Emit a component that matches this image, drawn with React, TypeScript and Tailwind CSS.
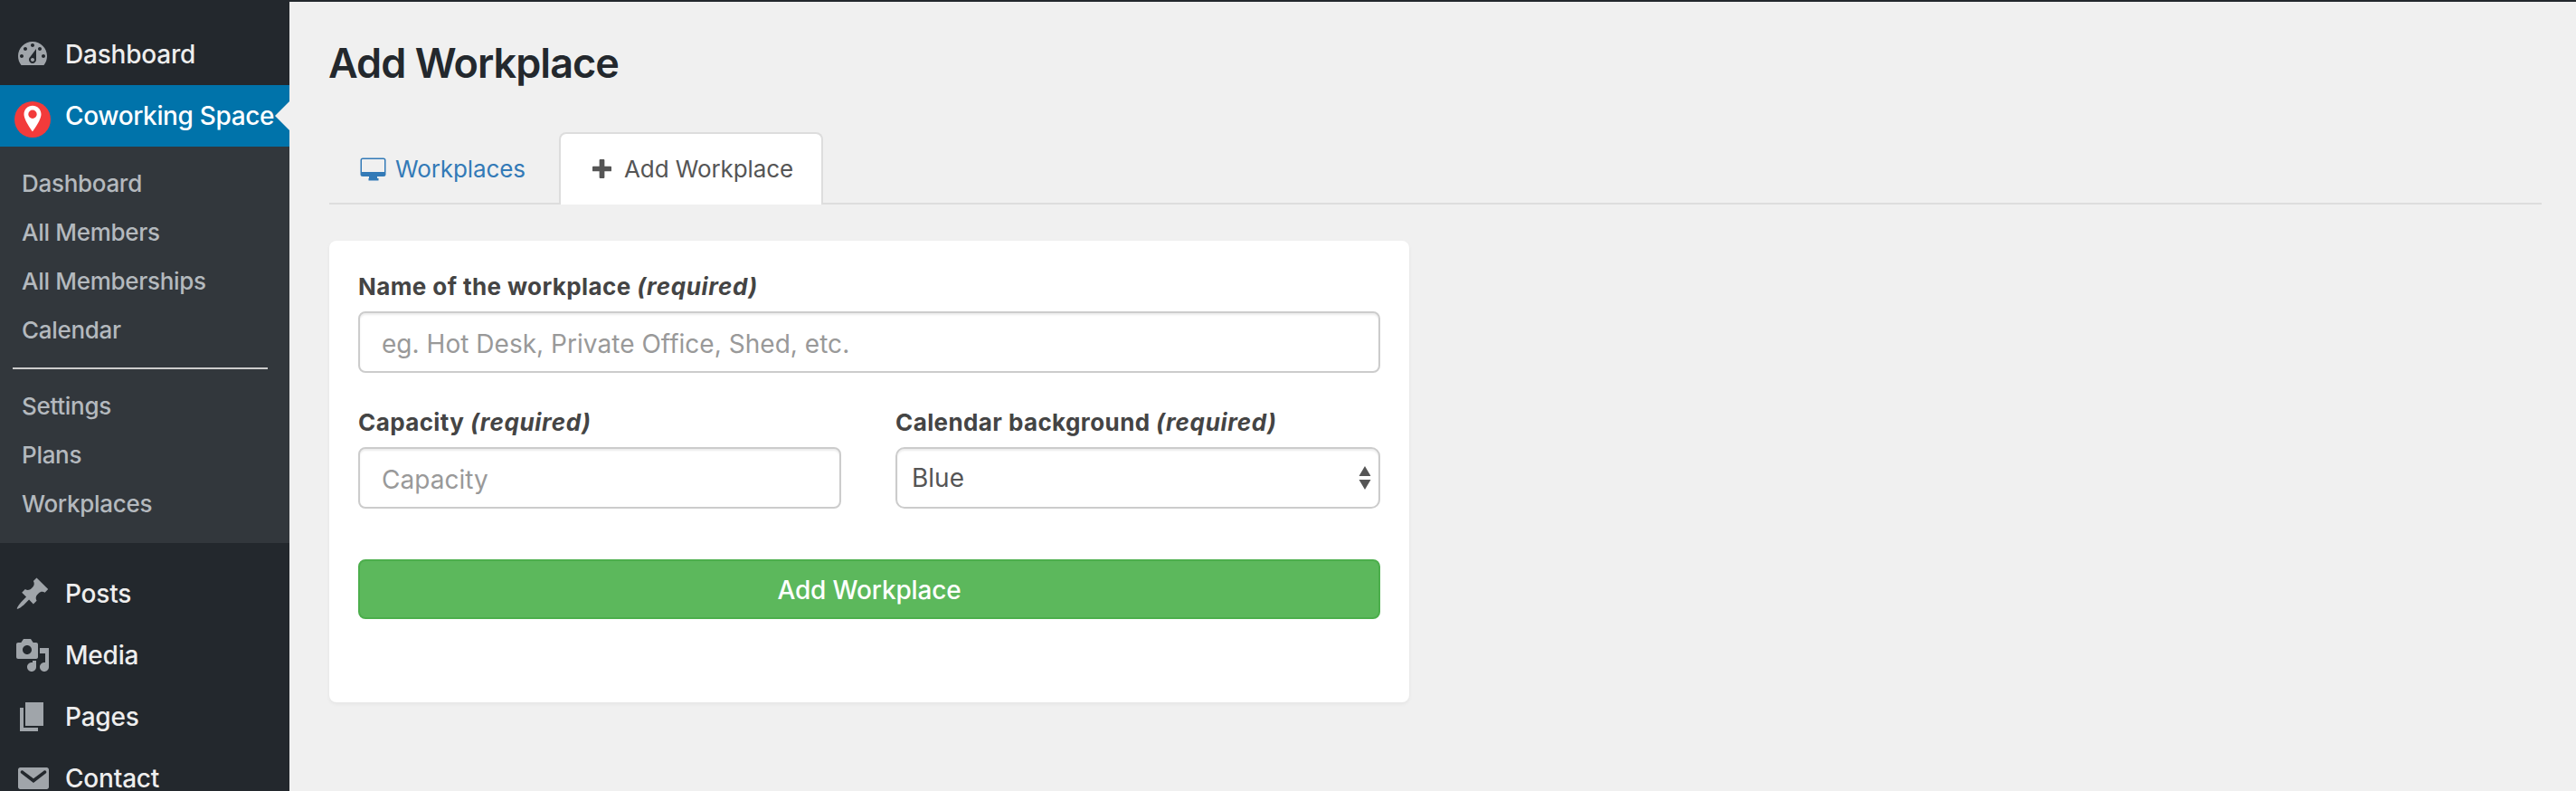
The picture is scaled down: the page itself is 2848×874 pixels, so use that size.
import React from "react";

const icons = {
  dashboard:
    "M3.76 16h12.48c1.1-1.37 1.76-3.11 1.76-5 0-4.42-3.58-8-8-8s-8 3.58-8 8c0 1.89.66 3.63 1.76 5zM10 4c.55 0 1 .45 1 1s-.45 1-1 1-1-.45-1-1 .45-1 1-1zM6 6c.55 0 1 .45 1 1s-.45 1-1 1-1-.45-1-1 .45-1 1-1zm8 0c.55 0 1 .45 1 1s-.45 1-1 1-1-.45-1-1 .45-1 1-1zm-5.37 5.55L12 7v6c0 1.1-.9 2-2 2s-2-.9-2-2c0-.57.24-1.08.63-1.45zM4 10c.55 0 1 .45 1 1s-.45 1-1 1-1-.45-1-1 .45-1 1-1zm12 0c.55 0 1 .45 1 1s-.45 1-1 1-1-.45-1-1 .45-1 1-1zm-5 3c0-.55-.45-1-1-1s-1 .45-1 1 .45 1 1 1 1-.45 1-1z",
  posts:
    "M10.44 3.02l1.82-1.82 6.36 6.35-1.83 1.82c-1.05-.68-2.48-.57-3.41.36l-.75.75c-.92.93-1.04 2.35-.35 3.41l-1.83 1.82-2.41-2.41-2.8 2.79c-.42.42-3.38 2.71-3.8 2.29s1.86-3.39 2.28-3.81l2.79-2.79L4.1 9.36l1.83-1.82c1.05.69 2.48.57 3.4-.36l.75-.75c.93-.92 1.05-2.35.36-3.41z",
  media:
    "M13 11V4c0-.55-.45-1-1-1h-1.67L9 1H5L3.67 3H2c-.55 0-1 .45-1 1v7c0 .55.45 1 1 1h10c.55 0 1-.45 1-1zM7 4.5c1.38 0 2.5 1.12 2.5 2.5S8.38 9.5 7 9.5 4.5 8.38 4.5 7 5.62 4.5 7 4.5zM14 6h5v10.5c0 1.38-1.12 2.5-2.5 2.5S14 17.88 14 16.5s1.12-2.5 2.5-2.5c.17 0 .34.02.5.05V9h-3V6zm-4 8.05V13h2v3.5c0 1.38-1.12 2.5-2.5 2.5S7 17.88 7 16.5 8.12 14 9.5 14c.17 0 .34.02.5.05z",
  pages: "M6 15V2h10v13H6zm-1 1h8v2H3V5h2v11z",
  contact:
    "M3.200 4h14.600c.7 0 1.200.5 1.200 1.200v9.600c0 .7-.5 1.200-1.200 1.200H3.200c-.7 0-1.200-.5-1.200-1.200V5.200C2 4.500 2.500 4 3.200 4zM3.500 6c-.3.400-.2.900.2 1.200l6.800 5.300 6.800-5.300c.4-.3.5-.8.2-1.200s-.8-.5-1.300-.1l-5.700 4.200-5.700-4.200c-.5-.4-1-.3-1.300.1z",
};

function MenuItem({ icon, label }: { icon: string; label: string }) {
  return (
    <a className="flex h-[68px] shrink-0 items-center pl-4 text-[#eee]">
      <svg viewBox="0 0 20 20" className="size-10 shrink-0 fill-[#a0a5aa]" fillRule="evenodd">
        <path d={icon} />
      </svg>
      <span className="ml-4 text-[28px] leading-[26px] font-medium tracking-[-0.2px] whitespace-nowrap">{label}</span>
    </a>
  );
}

function SubItem({ label }: { label: string }) {
  return (
    <a className="flex h-[54px] items-center pl-6 text-[26px] font-medium tracking-[-0.3px] whitespace-nowrap text-[#b4b9be]">
      {label}
    </a>
  );
}

function Label({ children }: { children: React.ReactNode }) {
  return (
    <label className="block h-9 pt-px text-[26px] leading-9 font-bold tracking-[0.4px] whitespace-nowrap text-[#444]">
      {children} <em className="tracking-[0.65px]">(required)</em>
    </label>
  );
}

const field =
  "block h-[68px] w-full rounded-lg border-2 border-[#ccc] bg-white px-6 pt-[3px] text-[28px] tracking-[0.03px] text-[#555] shadow-[inset_0_2px_2px_rgba(0,0,0,0.075)] outline-none placeholder:text-[#999] placeholder:opacity-100";

export default function App() {
  return (
    <div className="flex h-[874px] w-[2848px] overflow-hidden bg-[#f0f0f0] font-['Inter',sans-serif]">
      <aside className="flex w-80 shrink-0 flex-col overflow-hidden bg-[#23282d] pt-[26px]">
        <MenuItem icon={icons.dashboard} label="Dashboard" />
        <a className="relative flex h-[68px] shrink-0 items-center bg-[#0073aa] pl-4 text-white">
          <svg viewBox="0 0 40 40" className="mt-2 size-10 shrink-0">
            <circle cx="20" cy="20" r="20" fill="#f23b3b" />
            <path
              fill="#fff"
              fillRule="evenodd"
              d="M20 4.800c5.300 0 9.500 4.100 9.500 9.400C29.500 21 20 33.300 20 33.300S10.500 21 10.500 14.200c0-5.300 4.200-9.400 9.500-9.400zm0 4.800a4.700 4.700 0 1 0 0 9.400 4.700 4.700 0 0 0 0-9.400z"
            />
          </svg>
          <span className="ml-4 text-[28px] leading-none font-medium tracking-[-0.36px] whitespace-nowrap">
            Coworking Space
          </span>
          <span className="absolute top-[18px] right-0 border-y-16 border-r-16 border-y-transparent border-r-[#f0f0f0]" />
        </a>
        <nav className="h-[438px] shrink-0 bg-[#32373c] pt-[13px]">
          <SubItem label="Dashboard" />
          <SubItem label="All Members" />
          <SubItem label="All Memberships" />
          <SubItem label="Calendar" />
          <hr className="mt-[15px] mr-6 mb-[13px] ml-[14px] border-t-2 border-[#ccc]" />
          <SubItem label="Settings" />
          <SubItem label="Plans" />
          <SubItem label="Workplaces" />
        </nav>
        <div className="h-[22px] shrink-0" />
        <MenuItem icon={icons.posts} label="Posts" />
        <MenuItem icon={icons.media} label="Media" />
        <MenuItem icon={icons.pages} label="Pages" />
        <MenuItem icon={icons.contact} label="Contact" />
      </aside>

      <main className="flex-1 border-t-2 border-[#23282d] pr-[38px] pl-11">
        <h1 className="mt-9 -ml-px h-16 text-[45px] leading-[64px] font-semibold tracking-[-0.95px] whitespace-nowrap text-[#23282d]">
          Add Workplace
        </h1>
        <div className="mt-11 flex h-20 border-b-2 border-[#ddd]">
          <a className="flex w-[254px] items-center pt-[3px] pl-[34px] text-[26px] tracking-[-0.1px] whitespace-nowrap text-[#337ab7]">
            <svg viewBox="0 0 30 26" className="mr-[9px] h-[26px] w-[30px] fill-current">
              <path
                fillRule="evenodd"
                d="M3 .5h23a2.500 2.500 0 0 1 2.500 2.500v15.500a2.500 2.500 0 0 1-2.500 2.500h-7v2h1.500v2.500h-11V23H10v-2H3a2.500 2.500 0 0 1-2.500-2.500V3A2.500 2.500 0 0 1 3 .5zM2 3v13h25V3a.9.9 0 0 0-.9-.9H2.900A.9.9 0 0 0 2 3z"
              />
            </svg>
            <span>Workplaces</span>
          </a>
          <a className="-mb-[2px] flex w-[292px] items-center rounded-t-lg border-2 border-b-0 border-[#ddd] bg-white pb-px pl-[35px] text-[26px] tracking-[-0.1px] whitespace-nowrap text-[#555]">
            <svg viewBox="0 0 22 22" className="mr-[14px] size-[21px] fill-current">
              <path d="M9 0h4q1 0 1 1v7h7q1 0 1 1v4q0 1-1 1h-7v7q0 1-1 1H9q-1 0-1-1v-7H1q-1 0-1-1V9q0-1 1-1h7V1q0-1 1-1z" />
            </svg>
            <span>Add Workplace</span>
          </a>
        </div>

        <form className="mt-10 h-[510px] w-[1194px] rounded-lg bg-white px-8 pt-8 shadow-[0_2px_4px_rgba(0,0,0,0.05)]">
          <Label>Name of the workplace</Label>
          <input className={field + " mt-[10px]"} placeholder="eg. Hot Desk, Private Office, Shed, etc." />
          <div className="mt-9 flex gap-[60px]">
            <div className="w-[534px]">
              <Label>Capacity</Label>
              <input className={field + " mt-[10px]"} placeholder="Capacity" />
            </div>
            <div className="w-[536px]">
              <Label>Calendar background</Label>
              <div className="mt-[10px] flex h-[68px] items-center justify-between rounded-[10px] border-2 border-[#ccc] bg-white pr-2 pl-4 text-[28px] text-[#555] shadow-[inset_0_2px_2px_rgba(0,0,0,0.075)]">
                <span>Blue</span>
                <svg viewBox="0 0 14 26" className="h-[26px] w-[14px] fill-[#555]">
                  <path d="M7 0l6.500 11H.5zM7 26L.5 15h13z" />
                </svg>
              </div>
            </div>
          </div>
          <button
            type="button"
            className="mt-14 h-[66px] w-full rounded-lg border-2 border-[#4cae4c] bg-[#5cb85c] pt-[2px] text-[28px] font-medium tracking-[-0.15px] text-white"
          >
            Add Workplace
          </button>
        </form>
      </main>
    </div>
  );
}
